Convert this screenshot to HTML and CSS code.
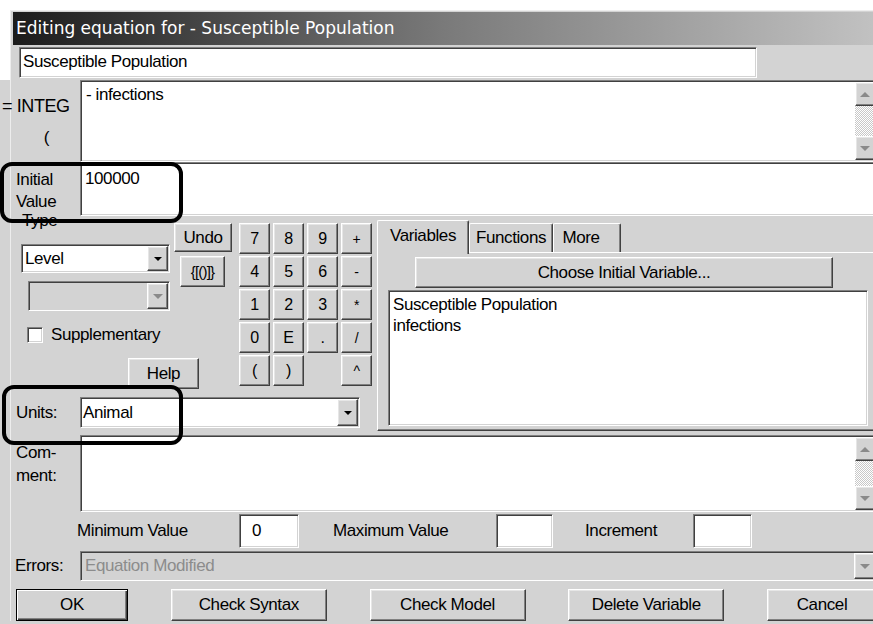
FILE: index.html
```html
<!DOCTYPE html>
<html lang="en">
<head>
<meta charset="utf-8">
<title>Editing equation for - Susceptible Population</title>
<link rel="stylesheet" href="styles.css">
</head>
<body>
<div class="dialog">
  <div class="titlebar">Editing equation for - Susceptible Population</div>

  <div class="name-row">
    <div class="field sunken name-field">Susceptible Population</div>
  </div>

  <div class="row integ-row">
    <div class="label integ-label">
      <span class="integ-eq">= INTEG</span>
      <span class="integ-paren">(</span>
    </div>
    <div class="field sunken memo">
      <div class="memo-text">- infections</div>
      <div class="scrollbar">
        <div class="sb-btn raised"><span class="tri up gray"></span></div>
        <div class="sb-track"></div>
        <div class="sb-btn raised"><span class="tri down gray"></span></div>
      </div>
    </div>
  </div>

  <div class="row initial-row">
    <div class="label initial-label">Initial<br>Value</div>
    <div class="field sunken initial-field">100000</div>
  </div>

  <div class="middle">
    <div class="left">
      <div class="controls">
        <div class="type-col">
          <div class="type-label">Type</div>
          <div class="combo sunken type-combo">
            <div class="combo-value">Level</div>
            <div class="combo-drop raised"><span class="tri down"></span></div>
          </div>
          <div class="combo sunken disabled sub-combo">
            <div class="combo-value"></div>
            <div class="combo-drop raised"><span class="tri down gray"></span></div>
          </div>
          <label class="check-row">
            <span class="checkbox sunken"></span>
            <span>Supplementary</span>
          </label>
          <div class="btn raised help-btn">Help</div>
        </div>
        <div class="edit-col">
          <div class="btn raised undo-btn">Undo</div>
          <div class="btn raised brace-btn">{[()]}</div>
        </div>
        <div class="keypad">
          <div class="btn raised key">7</div>
          <div class="btn raised key">8</div>
          <div class="btn raised key">9</div>
          <div class="btn raised key op">+</div>
          <div class="btn raised key">4</div>
          <div class="btn raised key">5</div>
          <div class="btn raised key">6</div>
          <div class="btn raised key op">-</div>
          <div class="btn raised key">1</div>
          <div class="btn raised key">2</div>
          <div class="btn raised key">3</div>
          <div class="btn raised key op">*</div>
          <div class="btn raised key">0</div>
          <div class="btn raised key">E</div>
          <div class="btn raised key">.</div>
          <div class="btn raised key op">/</div>
          <div class="btn raised key">(</div>
          <div class="btn raised key">)</div>
          <div class="key-gap"></div>
          <div class="btn raised key op">^</div>
        </div>
      </div>
      <div class="units-row">
        <div class="label units-label">Units:</div>
        <div class="combo sunken units-combo">
          <div class="combo-value">Animal</div>
          <div class="combo-drop raised"><span class="tri down"></span></div>
        </div>
      </div>
    </div>

    <div class="tabs">
      <div class="tabstrip">
        <div class="tab active tab-vars">Variables</div>
        <div class="tab tab-funcs">Functions</div>
        <div class="tab tab-more">More</div>
      </div>
      <div class="tab-panel">
        <div class="btn raised choose-btn">Choose Initial Variable...</div>
        <div class="listbox sunken">
          <div class="list-item">Susceptible Population</div>
          <div class="list-item">infections</div>
        </div>
      </div>
    </div>
  </div>

  <div class="row comment-row">
    <div class="label comment-label">Com-<br>ment:</div>
    <div class="field sunken memo">
      <div class="memo-text"></div>
      <div class="scrollbar">
        <div class="sb-btn raised"><span class="tri up gray"></span></div>
        <div class="sb-track"></div>
        <div class="sb-btn raised"><span class="tri down gray"></span></div>
      </div>
    </div>
  </div>

  <div class="range-row">
    <span class="range-label min-label">Minimum Value</span>
    <div class="field sunken range-field min-field">0</div>
    <span class="range-label max-label">Maximum Value</span>
    <div class="field sunken range-field max-field"></div>
    <span class="range-label inc-label">Increment</span>
    <div class="field sunken range-field inc-field"></div>
  </div>

  <div class="row errors-row">
    <div class="label errors-label">Errors:</div>
    <div class="combo sunken disabled errors-combo">
      <div class="combo-value">Equation Modified</div>
      <div class="combo-drop raised"><span class="tri down gray"></span></div>
    </div>
  </div>

  <div class="button-row">
    <div class="btn default-btn ok-btn">OK</div>
    <div class="btn raised wide-btn">Check Syntax</div>
    <div class="btn raised wide-btn">Check Model</div>
    <div class="btn raised wide-btn">Delete Variable</div>
    <div class="btn raised cancel-btn">Cancel</div>
  </div>
</div>

<!-- highlight marks drawn over the dialog -->
<div class="callout callout-initial"></div>
<div class="callout callout-units"></div>
</body>
</html>
```

FILE: styles.css
```css
* {
  box-sizing: border-box;
}

html, body {
  height: 624px;
}

body {
  margin: 0;
  position: relative;
  overflow: hidden;
  font-family: "Liberation Sans", Arial, sans-serif;
  font-size: 17px;
  letter-spacing: -0.4px;
  line-height: 22px;
  color: #000;
  background:
    linear-gradient(#fff, #fff) 0 0 / 100% 10px no-repeat,
    linear-gradient(#fff, #fff) 0 0 / 10px 80px no-repeat,
    #d3d3d3;
}

/* ---------- window frame ---------- */
.dialog {
  margin: 10px 0 0 10px;
  width: 867px;
  border-top: 1px solid #ededed;
  border-left: 1px solid #ededed;
  padding: 1px 0 0 2px;
  background: #d3d3d3;
}

.titlebar {
  height: 33px;
  padding-left: 3px;
  font-family: "DejaVu Sans", sans-serif;
  font-size: 17px;
  letter-spacing: 0;
  line-height: 33px;
  color: #fff;
  white-space: nowrap;
  background: linear-gradient(90deg, #1c1c1c 0%, #7a7a7a 50%, #c2c2c2 100%);
}

/* ---------- 3D borders ---------- */
.sunken {
  border: 1px solid;
  border-color: #808080 #fff #fff #808080;
  box-shadow: inset 1px 1px #404040, inset -1px -1px #d3d3d3;
  background: #fff;
}

.raised {
  border: 1px solid;
  border-color: #fff #404040 #404040 #fff;
  box-shadow: inset -1px -1px #808080, inset 1px 1px #e6e6e6;
  background: #d3d3d3;
}

.btn {
  display: flex;
  align-items: center;
  justify-content: center;
  white-space: nowrap;
}

/* ---------- small triangles ---------- */
.tri {
  width: 0;
  height: 0;
  border-left: 4px solid transparent;
  border-right: 4px solid transparent;
}

.tri.down {
  border-top: 4px solid #000;
}

.tri.up {
  border-bottom: 4px solid #000;
}

.tri.down.gray {
  border-top-color: #8a8a8a;
  border-left-width: 5px;
  border-right-width: 5px;
  border-top-width: 5px;
}

.tri.up.gray {
  border-bottom-color: #8a8a8a;
  border-left-width: 5px;
  border-right-width: 5px;
  border-bottom-width: 5px;
}

/* ---------- rows with a label column ---------- */
.row {
  display: grid;
  grid-template-columns: 67px 1fr;
}

.label {
  padding-left: 3px;
  white-space: nowrap;
}

.name-row {
  padding: 2px 0 2px 6px;
}

.name-field {
  width: 738px;
  height: 31px;
  padding: 3px 3px;
  white-space: nowrap;
}

/* multi-line edit with a scroll bar */
.memo {
  display: flex;
}

.memo-text {
  flex: 1;
  padding: 3px 5px;
}

.scrollbar {
  width: 20px;
  display: flex;
  flex-direction: column;
  margin: 1px 1px 1px 0;
}

.sb-btn {
  height: 24px;
  display: flex;
  align-items: center;
  justify-content: center;
}

.sb-track {
  flex: 1;
  background: repeating-conic-gradient(#ffffff 0 25%, #c8c8c8 0 50%) 0 0 / 2px 2px;
}

.integ-row {
  height: 82px;
}

.integ-label {
  display: flex;
  flex-direction: column;
  align-items: center;
  padding: 15px 0 0;
}

.integ-eq {
  align-self: flex-start;
  margin-left: -11px;
  font-size: 18px;
}

.integ-paren {
  margin-top: 10px;
}

.initial-row {
  height: 54px;
}

.initial-label {
  padding-top: 7px;
}

.initial-field {
  padding: 5px 4px;
}

/* ---------- middle block ---------- */
.middle {
  display: flex;
  height: 217px;
}

.left {
  width: 364px;
  display: flex;
  flex-direction: column;
}

.controls {
  height: 176px;
  display: flex;
}

.type-col {
  width: 160px;
  display: flex;
  flex-direction: column;
}

.type-label {
  margin: -6px 0 0 9px;
  height: 22px;
}

.combo {
  display: flex;
  white-space: nowrap;
}

.combo-value {
  flex: 1;
  padding: 0 3px;
  display: flex;
  align-items: center;
}

.combo-drop {
  width: 21px;
  margin: 1px 1px 1px 0;
  display: flex;
  align-items: center;
  justify-content: center;
}

.combo.disabled {
  background: #d3d3d3;
}

.type-combo {
  margin: 12px 0 0 8px;
  width: 149px;
  height: 29px;
}

.sub-combo {
  margin: 8px 0 0 15px;
  width: 142px;
  height: 30px;
}

.check-row {
  margin: 16px 0 0 14px;
  height: 16px;
  display: flex;
  align-items: center;
  gap: 8px;
  white-space: nowrap;
}

.checkbox {
  width: 16px;
  height: 16px;
  flex: none;
}

.help-btn {
  margin: 15px 0 0 115px;
  width: 71px;
  height: 31px;
  flex: none;
}

.edit-col {
  width: 65px;
  display: flex;
  flex-direction: column;
}

.undo-btn {
  margin: 7px 0 0 1px;
  width: 58px;
  height: 29px;
}

.brace-btn {
  margin: 4px 0 0 7px;
  width: 45px;
  height: 31px;
  font-size: 15px;
  letter-spacing: -0.8px;
}

.keypad {
  margin: 7px 0 0 1px;
  display: grid;
  grid-template-columns: repeat(4, 31px);
  grid-auto-rows: 31px;
  column-gap: 3px;
  row-gap: 2px;
  align-content: start;
}

.key {
  font-size: 16px;
}

.key.op {
  font-size: 14px;
}

.units-row {
  margin-top: 5px;
  height: 31px;
  display: grid;
  grid-template-columns: 67px 280px;
}

.units-label {
  display: flex;
  align-items: center;
}

.units-combo .combo-value {
  padding-left: 2px;
}

/* ---------- tab control ---------- */
.tabs {
  width: 500px;
  display: flex;
  flex-direction: column;
}

.tabstrip {
  height: 36px;
  display: flex;
  align-items: flex-end;
}

.tab {
  height: 29px;
  display: flex;
  align-items: center;
  justify-content: center;
  border-top: 1px solid #fff;
  border-left: 1px solid #fff;
  border-right: 1px solid #404040;
  box-shadow: inset -1px 0 #808080;
  border-radius: 2px 2px 0 0;
  background: #d3d3d3;
  white-space: nowrap;
}

.tab.active {
  height: 34px;
  margin-bottom: -2px;
  position: relative;
  z-index: 1;
  padding-bottom: 3px;
}

.tab-vars {
  width: 92px;
}

.tab-funcs {
  width: 84px;
}

.tab-more {
  width: 68px;
  padding-right: 12px;
}

.tab-panel {
  height: 179px;
  border-top: 1px solid #fff;
  border-left: 1px solid #fff;
  border-bottom: 1px solid #404040;
  box-shadow: inset 0 -1px #808080;
  display: flex;
  flex-direction: column;
}

.choose-btn {
  margin: 4px 0 0 37px;
  width: 418px;
  height: 31px;
}

.listbox {
  margin: 2px 0 0 10px;
  width: 480px;
  height: 136px;
  padding: 3px 4px;
  line-height: 21px;
}

/* ---------- lower rows ---------- */
.comment-row {
  margin-top: 2px;
  height: 77px;
}

.comment-label {
  padding-top: 6px;
  line-height: 23px;
}

.range-row {
  margin-top: 2px;
  height: 34px;
  display: flex;
  align-items: stretch;
}

.range-label {
  display: flex;
  align-items: center;
  white-space: nowrap;
}

.min-label {
  margin-left: 64px;
  width: 162px;
}

.max-label {
  margin-left: 34px;
  width: 163px;
}

.inc-label {
  margin-left: 32px;
  width: 108px;
}

.range-field {
  display: flex;
  align-items: center;
}

.min-field {
  width: 60px;
  padding-left: 12px;
}

.max-field {
  width: 57px;
}

.inc-field {
  width: 59px;
}

.errors-row {
  margin-top: 3px;
  height: 30px;
}

.errors-label {
  padding-left: 2px;
  display: flex;
  align-items: center;
}

.errors-combo .combo-value {
  padding-left: 4px;
  color: #8c8c8c;
}

.button-row {
  margin-top: 8px;
  height: 32px;
  padding-left: 3px;
  display: flex;
  justify-content: space-between;
}

.default-btn {
  border: 1px solid #000;
  box-shadow: inset 1px 1px #fff, inset -1px -1px #404040, inset -2px -2px #808080;
  background: #d3d3d3;
}

.ok-btn {
  width: 112px;
}

.wide-btn {
  width: 156px;
}

.cancel-btn {
  width: 110px;
}

/* ---------- highlight marks ---------- */
.callout {
  position: absolute;
  border: 4px solid #000;
  border-radius: 12px;
}

.callout-initial {
  left: 0;
  top: 162px;
  width: 183px;
  height: 61px;
}

.callout-units {
  left: 2px;
  top: 385px;
  width: 181px;
  height: 60px;
}
```
